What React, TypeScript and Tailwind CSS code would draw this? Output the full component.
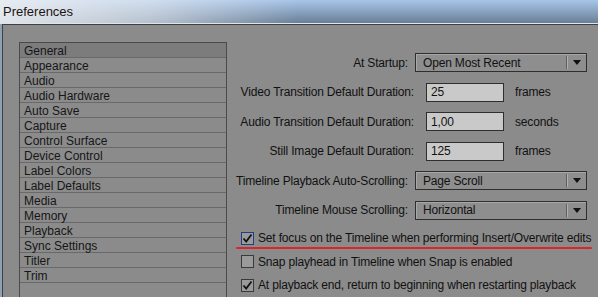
import React from "react";

const font = { fontFamily: '"Liberation Sans", Arial, sans-serif' };

const items = [
  "General","Appearance","Audio","Audio Hardware","Auto Save","Capture","Control Surface","Device Control",
  "Label Colors","Label Defaults","Media","Memory","Playback","Sync Settings","Titler","Trim",
];

function Dropdown({ value }: { value: string }) {
  return (
    <div className="ml-[7px] flex h-[19px] w-[172px] shrink-0 items-center border border-[#2e2e2e] bg-[#8e8e8e] shadow-[inset_1px_1px_0_#a8a8a8]">
      <span className="flex-1 whitespace-nowrap pl-[7px] text-[#111]">{value}</span>
      <div className="h-[13px] w-px bg-[#5e5e5e]" />
      <div className="h-[13px] w-px bg-[#b0b0b0]" />
      <div className="flex w-[18px] justify-center">
        <svg width="8" height="5" viewBox="0 0 8 5"><path d="M0 0H8L4 5Z" fill="#111" /></svg>
      </div>
    </div>
  );
}

function Input({ value, unit }: { value: string; unit: string }) {
  return (
    <>
      <div className="ml-[12px] flex h-[19px] w-[78px] shrink-0 items-center border border-[#2e2e2e] bg-[#c9c9c9] pl-[4px] text-[#111]">{value}</div>
      <span className="ml-[11px] whitespace-nowrap text-[#111]">{unit}</span>
    </>
  );
}

function Check({ checked, focus }: { checked: boolean; focus?: boolean }) {
  return (
    <div className={`flex h-[13px] w-[13px] shrink-0 items-center justify-center border ${focus ? "border-[#1e3f86]" : "border-[#3a3a3a]"} bg-[#9a9a9a]`}>
      {checked && (
        <svg width="11" height="11" viewBox="0 0 11 11"><path d="M1.5 5.5L4.2 8.5L9.5 1.5" stroke="#111" strokeWidth="1.8" fill="none" /></svg>
      )}
    </div>
  );
}

export default function App() {
  return (
    <div className="relative h-[297px] w-[598px] overflow-hidden text-[12px] tracking-[-0.17px]" style={font}>
      <div className="relative flex h-[23px] items-center bg-[linear-gradient(to_bottom,#a8c5e9,#6a7f96)] pl-[3px]">
        <div className="absolute left-0 top-0 h-[23px] w-[598px] bg-[linear-gradient(to_right,rgba(238,240,244,0.9),rgba(235,238,242,0.6)_25%,rgba(235,238,242,0)_50%)]" />
        <span className="relative text-[13px] tracking-normal text-[#1c1410]">Preferences</span>
      </div>
      <div className="h-px bg-[#dce4ec]" />
      <div className="flex h-[273px] bg-[#8fa0b2] pl-[2px]">
        <div className="flex flex-1 border-l border-t border-[#404040] bg-[#8b8b8b] pl-[16px] pt-[17px]">
          <div className="h-[260px] w-[208px] shrink-0 border border-[#4a4a4a]">
            {items.map((it, i) => (
              <div key={it} className={`flex h-[15px] items-center whitespace-nowrap border-b border-[#696969] pl-[4px] pt-px tracking-normal text-[#161616] ${i === 0 ? "bg-[#7c7c7c]" : ""}`}>
                {it}
              </div>
            ))}
          </div>
          <div className="ml-[9px] flex flex-1 flex-col pt-[6px]">
            <div className="flex h-[30px] items-center">
              <span className="w-[172px] shrink-0 whitespace-nowrap text-right text-[#111]">At Startup:</span>
              <Dropdown value="Open Most Recent" />
            </div>
            <div className="flex h-[30px] items-center">
              <span className="w-[178px] shrink-0 whitespace-nowrap text-right text-[#111]">Video Transition Default Duration:</span>
              <Input value="25" unit="frames" />
            </div>
            <div className="flex h-[30px] items-center">
              <span className="w-[178px] shrink-0 whitespace-nowrap text-right text-[#111]">Audio Transition Default Duration:</span>
              <Input value="1,00" unit="seconds" />
            </div>
            <div className="flex h-[30px] items-center">
              <span className="w-[178px] shrink-0 whitespace-nowrap text-right text-[#111]">Still Image Default Duration:</span>
              <Input value="125" unit="frames" />
            </div>
            <div className="flex h-[30px] items-center">
              <span className="w-[172px] shrink-0 whitespace-nowrap text-right text-[#111]">Timeline Playback Auto-Scrolling:</span>
              <Dropdown value="Page Scroll" />
            </div>
            <div className="flex h-[30px] items-center">
              <span className="w-[172px] shrink-0 whitespace-nowrap text-right text-[#111]">Timeline Mouse Scrolling:</span>
              <Dropdown value="Horizontal" />
            </div>
            <div className="relative mt-px flex h-[24px] items-center pl-[5px]">
              <Check checked focus />
              <span className="ml-[4px] whitespace-nowrap text-[#111]">Set focus on the Timeline when performing Insert/Overwrite edits</span>
              <div className="absolute left-0 top-[21px] h-[2px] w-[356px] rounded-full bg-[#d8262a]" />
            </div>
            <div className="flex h-[24px] items-center pl-[5px]">
              <Check checked={false} />
              <span className="ml-[4px] whitespace-nowrap text-[#111]">Snap playhead in Timeline when Snap is enabled</span>
            </div>
            <div className="flex h-[24px] items-center pl-[5px]">
              <Check checked />
              <span className="ml-[4px] whitespace-nowrap text-[#111]">At playback end, return to beginning when restarting playback</span>
            </div>
          </div>
        </div>
      </div>
    </div>
  );
}
